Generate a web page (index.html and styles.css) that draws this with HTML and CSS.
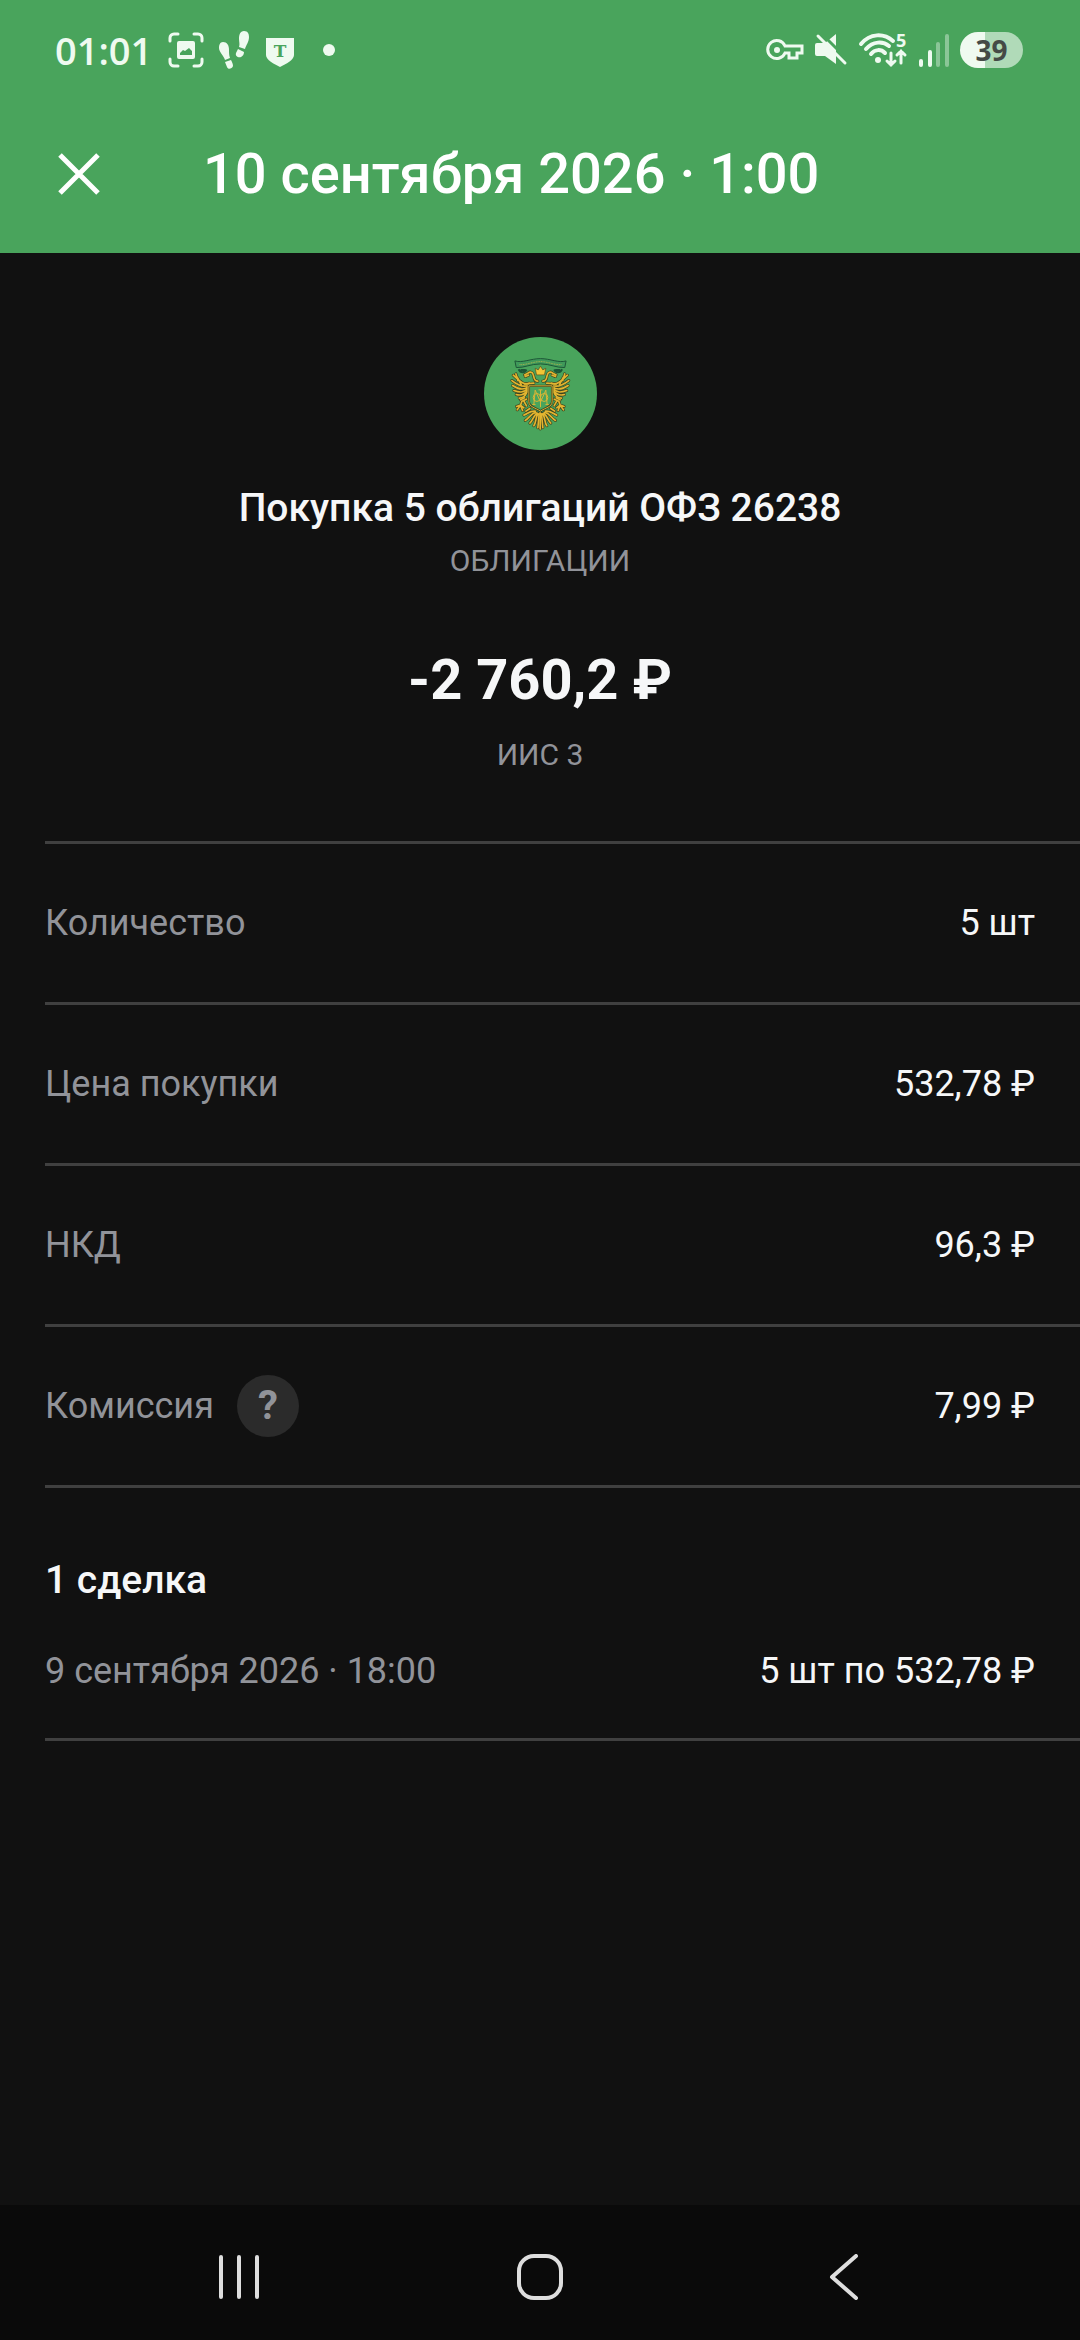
FILE: index.html
```html
<!DOCTYPE html>
<html lang="ru">

<head>
    <meta charset="UTF-8">
    <meta name="viewport" content="width=device-width, initial-scale=1.0">
    <title>Покупка 5 облигаций ОФЗ 26238</title>
    <link rel="stylesheet" href="styles.css">
</head>

<body>
    <header class="header">
        <div class="status">
            <span class="time">01:01</span>
            <div class="status-left">
                <svg width="36" height="36" viewBox="0 0 36 36" fill="none" stroke="currentColor" stroke-width="3" stroke-linecap="round">
                    <path d="M2 9V6a4 4 0 0 1 4-4h4M26 2h4a4 4 0 0 1 4 4v3M34 27v3a4 4 0 0 1-4 4h-4M10 34H6a4 4 0 0 1-4-4v-3" />
                    <path fill="currentColor" stroke="none" fill-rule="evenodd" d="M11 9h14a2 2 0 0 1 2 2v14a2 2 0 0 1-2 2H11a2 2 0 0 1-2-2V11a2 2 0 0 1 2-2zM12 23h12v-4l-3-3-4 3-2-1-3 3z" />
                </svg>
                <svg class="steps" width="32" height="40" viewBox="0 0 32 40" fill="currentColor">
                    <path d="M5 12c4 0 6 3 6 8 0 3 0 5 1 8l-5 2c-1-4-6-8-6-12 0-3 1-6 4-6z" />
                    <path d="M7 32l6-2c1 2 2 4 2 6-1 3-5 4-6 1z" />
                    <path d="M26 1c4 0 5 3 5 6 0 5-3 8-4 12l-6-2c1-3 0-5 0-8 0-4 1-8 5-8z" />
                    <path d="M20 19l6 3c0 2-1 4-3 5-3 1-6-1-5-4z" />
                </svg>
                <svg class="shield" width="30" height="30" viewBox="0 0 30 30">
                    <path fill="currentColor" d="M1 1h28v17c0 5-8 9-14 12C9 27 1 23 1 18z" />
                    <text class="shield-letter" x="15" y="20" text-anchor="middle">T</text>
                </svg>
                <span class="dot"></span>
            </div>
            <div class="status-right">
                <svg width="38" height="22" viewBox="0 0 38 22" fill="none" stroke="currentColor" stroke-width="3">
                    <path d="M19 7a9 9 0 1 0 0 7h4v5h8v-5h5V7z" />
                    <circle cx="11" cy="11" r="3" fill="currentColor" stroke="none" />
                </svg>
                <svg width="34" height="34" viewBox="0 0 34 34">
                    <path fill="currentColor" d="M3 10h8L22 1v30L11 23H3a2 2 0 0 1-2-2v-9a2 2 0 0 1 2-2z" />
                    <path class="slash-gap" d="M7 0l27 27" />
                    <path d="M4 3l27 27" fill="none" stroke="currentColor" stroke-width="3" stroke-linecap="round" />
                </svg>
                <svg width="50" height="36" viewBox="0 0 50 36" fill="none" stroke="currentColor" stroke-width="3" stroke-linecap="round">
                    <path stroke-width="4" d="M3 12c9-11 23-11 32-3M8 17c7-8 17-8 23-3M13 22c4-5 10-5 14-1" />
                    <circle cx="20" cy="28" r="3" fill="currentColor" stroke="none" />
                    <path stroke-width="3" d="M33 21v12M29 29l4 4 4-4M43 31V19M39 23l4-4 4 4" />
                    <text class="wifi-band" x="38" y="15">5</text>
                </svg>
                <svg width="32" height="36" viewBox="0 0 32 36" stroke="currentColor" stroke-width="4" stroke-linecap="round">
                    <path d="M3 29v4M12 20v13" />
                    <path opacity=".4" d="M20 12v21M29 4v29" />
                </svg>
                <span class="battery">39</span>
            </div>
        </div>
        <div class="appbar">
            <button class="icon-btn" type="button" aria-label="Закрыть">
                <svg width="42" height="42" viewBox="0 0 42 42" fill="none" stroke="currentColor" stroke-width="5">
                    <path d="M2 2l38 38M40 2L2 40" />
                </svg>
            </button>
            <h1 class="appbar-title">10 сентября 2026 · 1:00</h1>
        </div>
    </header>

    <main class="main">
        <section class="summary">
            <svg class="logo" viewBox="-72 -55 340 340">
                <defs>
                    <g id="wing">
                        <!-- крыло -->
                        <path d="M64 84C48 92 34 76 16 60M62 90C46 98 30 90 12 76M61 95C46 106 30 102 14 91M60 100C46 114 34 112 18 106M59 105C48 120 38 122 25 118M58 110C50 126 44 128 34 129M40 88L28 66M30 76L24 56" />
                        <!-- шея и голова -->
                        <path d="M90 78C76 78 80 66 76 58 74 50 64 48 60 54L50 59M62 60L52 64M78 84L50 86" />
                        <!-- лапа -->
                        <path d="M56 132L42 138 38 150 26 154M48 138L56 152M38 150L28 164M38 150L44 166M38 150L48 158M50 128L38 134" />
                        <!-- хвост -->
                        <path d="M82 168C66 166 60 176 48 180M84 172C70 174 66 188 52 196M88 174C76 182 76 196 66 204M90 176C82 190 86 200 78 212M94 176L90 218M66 160L54 168" />
                    </g>
                    <g id="eagle">
                        <use href="#wing" />
                        <use href="#wing" transform="matrix(-1 0 0 1 195 0)" />
                        <path d="M97 168v54" />
                    </g>
                </defs>
                <circle cx="98" cy="115" r="170" fill="#49a45c" />
                <g fill="none" stroke-linecap="round" stroke-linejoin="round">
                    <use href="#eagle" stroke="#3c431f" stroke-width="9" />
                    <use href="#eagle" stroke="#e3b530" stroke-width="5" />
                </g>
                <!-- лента -->
                <path d="M21 17C44 24 68 10 98 10s54 14 77 7l-4 20C145 38 128 26 98 26S50 38 25 37z" fill="#3f995a" stroke="#1d5637" stroke-width="3" />
                <path d="M35 28c20 2 40-9 63-9s42 11 63 9" fill="none" stroke="#a5b24d" stroke-width="3" stroke-dasharray="3 2" />
                <path d="M32 42c6 12 18 12 24 1M163 42c-6 12-18 12-24 1M38 44h14M157 44h-14" fill="none" stroke="#1d5637" stroke-width="6" />
                <!-- корона -->
                <path d="M82 39l9 5 7-11 7 11 9-5-4 20H86z" fill="#f0c536" stroke="#5a4b1d" stroke-width="2" />
                <!-- щит -->
                <path d="M63 92h70v48c0 15-20 18-35 28-15-10-35-13-35-28z" fill="#49a45c" stroke="#3c431f" stroke-width="7" />
                <path d="M63 92h70v48c0 15-20 18-35 28-15-10-35-13-35-28z" fill="none" stroke="#d3b034" stroke-width="3" />
                <path d="M78 148l4-43 16 36 16-36 4 43M98 104v52M92 104h12M73 148h10M113 148h10" fill="none" stroke="#d9b635" stroke-width="3" />
                <ellipse cx="87" cy="127" rx="11" ry="12" fill="none" stroke="#d9b635" stroke-width="3" />
                <ellipse cx="109" cy="127" rx="11" ry="12" fill="none" stroke="#d9b635" stroke-width="3" />
            </svg>
            <h2 class="summary-title">Покупка 5 облигаций ОФЗ 26238</h2>
            <p class="caption">ОБЛИГАЦИИ</p>
            <p class="amount">-2 760,2 ₽</p>
            <p class="caption">ИИС 3</p>
        </section>

        <dl class="details">
            <div class="row">
                <dt>Количество</dt>
                <dd>5 шт</dd>
            </div>
            <div class="row">
                <dt>Цена покупки</dt>
                <dd>532,78 ₽</dd>
            </div>
            <div class="row">
                <dt>НКД</dt>
                <dd>96,3 ₽</dd>
            </div>
            <div class="row">
                <dt>Комиссия <button class="help" type="button" aria-label="О комиссии">?</button></dt>
                <dd>7,99 ₽</dd>
            </div>
        </dl>

        <section class="deals">
            <h3 class="deals-title">1 сделка</h3>
            <div class="deal">
                <span class="deal-date">9 сентября 2026 · 18:00</span>
                <span>5 шт по 532,78 ₽</span>
            </div>
        </section>
    </main>

    <nav class="navbar">
        <button class="nav-btn" type="button" aria-label="Недавние">
            <svg width="46" height="46" viewBox="0 0 46 46">
                <path d="M5 3v40M23 3v40M41 3v40" />
            </svg>
        </button>
        <button class="nav-btn" type="button" aria-label="Домой">
            <svg width="46" height="46" viewBox="0 0 46 46">
                <rect x="2" y="2" width="42" height="42" rx="15" />
            </svg>
        </button>
        <button class="nav-btn" type="button" aria-label="Назад">
            <svg width="46" height="46" viewBox="0 0 46 46">
                <path d="M38 2L14 23l24 21" />
            </svg>
        </button>
    </nav>
</body>

</html>
```
FILE: styles.css
```css
* {
    margin: 0;
    padding: 0;
    box-sizing: border-box;
}

body {
    display: flex;
    flex-direction: column;
    min-height: 100vh;
    background-color: #111111;
    color: #f6f7f8;
    font-family: Roboto, "Noto Sans", sans-serif;
    font-size: 36px;
    line-height: 50px;
}

svg {
    display: block;
    flex-shrink: 0;
}

button {
    border: none;
    background: none;
    color: inherit;
    font: inherit;
    cursor: pointer;
}

.header {
    background-color: #49a45c;
    color: #ffffff;
}

.status {
    display: flex;
    align-items: center;
    height: 100px;
    padding: 0 57px 0 55px;
    color: #effaf0;
    font-family: "Open Sans", sans-serif;
    font-weight: 600;
}

.time {
    font-size: 38px;
}

.status-left {
    display: flex;
    align-items: center;
    margin-left: 16px;
}

.steps {
    margin-left: 14px;
}

.shield {
    margin: 4px 28px 0 15px;
}

.shield-letter {
    fill: #49a45c;
    font: bold 17px "DejaVu Serif", serif;
}

.dot {
    width: 12px;
    height: 12px;
    border-radius: 50%;
    background-color: currentColor;
}

.status-right {
    display: flex;
    align-items: center;
    gap: 10px;
    margin-left: auto;
}

.status-right svg {
    overflow: visible;
}

.slash-gap {
    fill: none;
    stroke: #49a45c;
    stroke-width: 3px;
}

.wifi-band {
    fill: currentColor;
    stroke: none;
    font-size: 18px;
    font-weight: 700;
    line-height: 18px;
}

.battery {
    width: 63px;
    height: 36px;
    border-radius: 18px;
    background: linear-gradient(to right, #effaf0 39%, #b0dab8 39%);
    color: #454a46;
    font-size: 28px;
    font-weight: 700;
    line-height: 36px;
    text-align: center;
}

.appbar {
    display: flex;
    align-items: center;
    gap: 103px;
    padding: 41px 58px 46px;
}

.icon-btn {
    flex-shrink: 0;
}

.appbar-title {
    font-size: 56px;
    font-weight: 500;
    line-height: 66px;
}

.main {
    flex: 1;
}

.summary {
    display: flex;
    flex-direction: column;
    align-items: center;
    padding: 84px 45px 66px;
    text-align: center;
}

.logo {
    width: 113px;
    height: 113px;
}

.summary-title {
    margin: 33px 0 8px;
    font-size: 39px;
    font-weight: 500;
}

.caption {
    color: #919399;
    font-size: 30px;
    line-height: 40px;
}

.amount {
    margin: 66px 0 22px;
    font-size: 56px;
    font-weight: 700;
    line-height: 66px;
}

.details {
    margin-left: 45px;
    border-top: 3px solid #404040;
}

.row {
    display: flex;
    align-items: center;
    justify-content: space-between;
    height: 161px;
    padding-right: 45px;
    border-bottom: 3px solid #404040;
}

.row dt {
    display: flex;
    align-items: center;
    gap: 23px;
    color: #919399;
}

.help {
    width: 62px;
    height: 62px;
    border-radius: 50%;
    background-color: #2b2b2b;
    font-size: 40px;
    font-weight: 700;
}

.deals {
    margin-left: 45px;
    padding: 67px 45px 42px 0;
    border-bottom: 3px solid #404040;
}

.deals-title {
    font-size: 39px;
    font-weight: 500;
}

.deal {
    display: flex;
    justify-content: space-between;
    margin-top: 41px;
}

.deal-date {
    color: #919399;
}

.navbar {
    display: flex;
    height: 135px;
    padding: 8px 88px 0;
    background-color: #0a0a0a;
    color: #dedede;
}

.nav-btn {
    display: flex;
    flex: 1;
    align-items: center;
    justify-content: center;
}

.nav-btn svg {
    fill: none;
    stroke: currentColor;
    stroke-width: 4px;
    stroke-linecap: round;
    stroke-linejoin: round;
}
```
